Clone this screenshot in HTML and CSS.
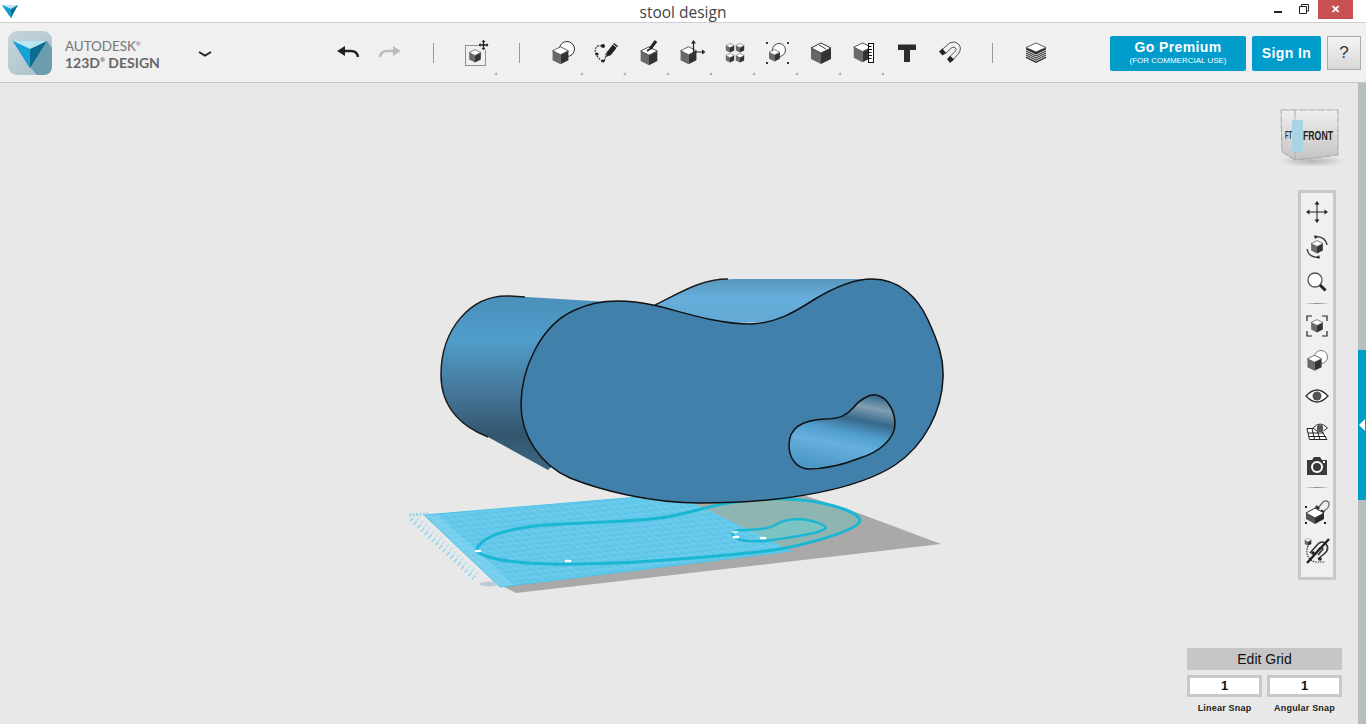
FILE: index.html
```html
<!DOCTYPE html>
<html lang="en">
<head>
    <meta charset="UTF-8">
    <meta name="viewport" content="width=device-width, initial-scale=1.0">
    <title>stool design</title>
    <link rel="stylesheet" href="styles.css">
</head>
<body>
    <svg class="defs" width="0" height="0">
        <defs>
            <symbol id="cube" viewBox="0 0 24 24">
                <polygon points="2,6 12,11 12,23 2,18" fill="#6a6a6a"/>
                <polygon points="22,6 12,11 12,23 22,18" fill="#333"/>
                <polygon points="12,1 22,6 12,11 2,6" fill="#fff" stroke="#333"/>
            </symbol>
            <linearGradient id="back-left" x1="0" y1="0" x2="0" y2="1">
                <stop offset="0" stop-color="#4a90bb"/>
                <stop offset="0.25" stop-color="#509dcb"/>
                <stop offset="0.55" stop-color="#45779a"/>
                <stop offset="0.8" stop-color="#33566e"/>
                <stop offset="1" stop-color="#3c6682"/>
            </linearGradient>
            <linearGradient id="back-top" x1="0" y1="0" x2="0" y2="1">
                <stop offset="0" stop-color="#5a97bc"/>
                <stop offset="0.4" stop-color="#66aedb"/>
                <stop offset="1" stop-color="#62a8d4"/>
            </linearGradient>
            <linearGradient id="hole" x1="0.7" y1="0" x2="0.4" y2="1">
                <stop offset="0" stop-color="#3f6f90"/>
                <stop offset="0.14" stop-color="#7f9fb4"/>
                <stop offset="0.32" stop-color="#39688a"/>
                <stop offset="0.5" stop-color="#4f9ccb"/>
                <stop offset="0.68" stop-color="#66b0dc"/>
                <stop offset="1" stop-color="#4b97c6"/>
            </linearGradient>
            <linearGradient id="cube-face" x1="0" y1="0" x2="0" y2="1">
                <stop offset="0" stop-color="#efefef"/>
                <stop offset="1" stop-color="#c4c4c4"/>
            </linearGradient>
            <radialGradient id="cube-shadow">
                <stop offset="0" stop-color="#b4b4b4"/>
                <stop offset="1" stop-color="#e8e8e8"/>
            </radialGradient>
            <pattern id="plate-grid" width="8" height="8" patternUnits="userSpaceOnUse" patternTransform="matrix(1 -0.11 0.8 0.55 424 515)">
                <rect width="8" height="8" fill="#63c8ea"/>
                <path d="M0 0H8M0 0V8" stroke="#4fbde3" stroke-width="0.8" fill="none"/>
                <path d="M0 4H8M4 0V8" stroke="#7dd3ef" stroke-width="0.5" fill="none"/>
            </pattern>
        </defs>
    </svg>

    <header class="titlebar">
        <svg class="app-mark" width="18" height="16" viewBox="0 0 18 16">
            <polygon points="1,2 17,2 10,15" fill="#0a6d92"/>
            <polygon points="1,2 10,6 10,15" fill="#12a0d0"/>
            <polygon points="1,2 17,2 10,6" fill="#b8e4f2"/>
        </svg>
        <div class="doc-title">stool design</div>
        <div class="win-controls">
            <span class="win-min"></span>
            <svg class="win-restore" width="10" height="10" viewBox="0 0 10 10">
                <path d="M2.5 2.5V.5H9.5V7H7.5M.5 2.5H7.5V9.5H.5Z" fill="none" stroke="#222"/>
            </svg>
            <span class="win-close">&#x2715;</span>
        </div>
    </header>

    <nav class="toolbar">
        <div class="brand">
            <svg class="logo" width="44" height="44" viewBox="0 0 44 44">
                <defs>
                    <linearGradient id="logo-bg" x1="0" y1="0" x2="1" y2="1">
                        <stop offset="0" stop-color="#c8d6dc"/>
                        <stop offset="1" stop-color="#a9bec7"/>
                    </linearGradient>
                </defs>
                <rect width="44" height="44" rx="9" fill="url(#logo-bg)"/>
                <path d="M39 10 L44 17 V35 Q44 44 35 44 H29 L22 36Z" fill="#6b9cb0"/>
                <polygon points="5,10 39,10 22,37" fill="#0b6c90"/>
                <polygon points="5,10 22,18 22,37" fill="#12a3d8"/>
                <polygon points="5,10 39,10 22,18" fill="#b9e6f5"/>
            </svg>
            <div class="brand-text">
                <div class="brand-top">AUTODESK<sup>&reg;</sup></div>
                <div class="brand-bottom">123D<sup>&reg;</sup> DESIGN</div>
            </div>
            <svg class="brand-menu" width="14" height="6" viewBox="0 0 14 6">
                <path d="M1 1 L7 4.5 L13 1" fill="none" stroke="#222" stroke-width="2"/>
            </svg>
        </div>

        <div class="tool-group history">
            <div class="tool">
                <svg width="24" height="16" viewBox="0 0 24 16"><path d="M1 6 L9 1 V11Z" fill="#222"/><path d="M8 6 H15 Q21 6 22 12" fill="none" stroke="#222" stroke-width="2.4"/></svg>
            </div>
            <div class="tool">
                <svg width="24" height="16" viewBox="0 0 24 16"><path d="M23 6 L15 1 V11Z" fill="#bbb"/><path d="M16 6 H9 Q3 6 2 12" fill="none" stroke="#bbb" stroke-width="2.4"/></svg>
            </div>
        </div>
        <span class="vsep"></span>
        <div class="tool-group">
            <div class="tool more">
                <svg width="26" height="26" viewBox="0 0 26 26">
                    <rect x="1.5" y="5.5" width="20" height="20" fill="none" stroke="#333" stroke-dasharray="1 1"/>
                    <rect x="14" y="0" width="12" height="10" fill="#f0f0f0"/>
                    <path d="M19.5 .5V9.5M15 5H24" stroke="#222" stroke-width="1.4"/>
                    <path d="M19.5 0L17.5 2H21.5ZM19.5 10L17.5 8H21.5ZM14.5 5L16.5 3V7ZM24.5 5L22.5 3V7Z" fill="#222"/>
                    <use href="#cube" x="4" y="9" width="14" height="14"/>
                </svg>
            </div>
        </div>
        <span class="vsep"></span>
        <div class="tool-group">
            <div class="tool more">
                <svg width="26" height="26" viewBox="0 0 26 26">
                    <circle cx="17" cy="9" r="7.5" fill="#fff" stroke="#333"/>
                    <use href="#cube" x="1" y="6" width="19" height="19"/>
                </svg>
            </div>
            <div class="tool more">
                <svg width="26" height="26" viewBox="0 0 26 26">
                    <path d="M9 6 C3 4 1 10 3 14 C5 18 8 21 10 21 C13 21 12 14 14 12" fill="none" stroke="#333" stroke-width="1.2" stroke-dasharray="2 1"/>
                    <circle cx="10" cy="6" r="2" fill="#222"/>
                    <circle cx="4" cy="14" r="1.6" fill="#222"/>
                    <circle cx="10" cy="21" r="1.6" fill="#222"/>
                    <path d="M14 12 L21 3 L25 6 L18 15 L13 17Z" fill="#222"/>
                    <path d="M20 4.5 L24 7.5" stroke="#f0f0f0"/>
                </svg>
            </div>
            <div class="tool more">
                <svg width="26" height="26" viewBox="0 0 26 26">
                    <use href="#cube" x="3" y="6" width="20" height="20"/>
                    <path d="M20 1 L14 9" stroke="#222" stroke-width="3"/>
                    <path d="M14 9 L11 11" stroke="#222" stroke-width="1.6"/>
                </svg>
            </div>
            <div class="tool more">
                <svg width="28" height="26" viewBox="0 0 28 26">
                    <use href="#cube" x="1" y="6" width="19" height="19"/>
                    <path d="M15.5 2V12H26" stroke="#222" fill="none" stroke-width="1.2"/>
                    <path d="M15.5 0L13 3.5H18ZM27.5 12L24 9.500V14.500Z" fill="#222"/>
                </svg>
            </div>
            <div class="tool more">
                <svg width="20" height="22" viewBox="0 0 20 22">
                    <use href="#cube" x="0" y="1" width="10" height="10"/>
                    <use href="#cube" x="10" y="1" width="10" height="10"/>
                    <use href="#cube" x="0" y="11" width="10" height="10"/>
                    <use href="#cube" x="10" y="11" width="10" height="10"/>
                </svg>
            </div>
            <div class="tool more">
                <svg width="26" height="26" viewBox="0 0 26 26">
                    <path d="M1 2H3V4H1ZM22 2H24V4H22ZM1 22H3V24H1ZM22 22H24V24H22Z" fill="#333"/>
                    <circle cx="14" cy="10" r="6.500" fill="#fff" stroke="#444"/>
                    <use href="#cube" x="3" y="9" width="13" height="13"/>
                </svg>
            </div>
            <div class="tool more">
                <svg width="24" height="24" viewBox="0 0 24 24">
                    <polygon points="2,7 12,12 12,23 2,18" fill="#666"/>
                    <polygon points="22,7 12,12 12,23 22,18" fill="#333"/>
                    <polygon points="12,2 22,7 12,12 2,7" fill="#fff" stroke="#333"/>
                    <path d="M10 4 L17 8" stroke="#444"/>
                </svg>
            </div>
            <div class="tool more">
                <svg width="24" height="24" viewBox="0 0 24 24">
                    <use href="#cube" x="0" y="1" width="21" height="21"/>
                    <rect x="16.500" y="2.500" width="5" height="19" fill="#fff" stroke="#111"/>
                    <path d="M17 5.500H19.500M17 8.500H20M17 11.500H19.500M17 14.500H20M17 17.500H19.500" stroke="#111"/>
                </svg>
            </div>
            <div class="tool">
                <svg width="20" height="20" viewBox="0 0 20 20">
                    <path d="M1 1.500H19V7H13V19H7V7H1Z" fill="#2b2b2b"/>
                </svg>
            </div>
            <div class="tool">
                <svg width="24" height="24" viewBox="0 0 24 24">
                    <path d="M3.500 9 L12 1.800 Q17 -.500 20.500 3 Q24 7 21 12 L14 20" fill="none" stroke="#555" stroke-width="1"/>
                    <path d="M7 13 L14 6.500 Q16 5.500 17.500 7 Q19 8.500 17 10.500 L10.500 17" fill="none" stroke="#555" stroke-width="1"/>
                    <path d="M1 10.500 L4.500 7.500 L8 12 L4.500 14.500ZM9 18 L12.500 15 L16 18.500 L12 22Z" fill="#222"/>
                </svg>
            </div>
        </div>
        <span class="vsep"></span>
        <div class="tool-group">
            <div class="tool">
                <svg width="22" height="22" viewBox="0 0 22 22">
                    <polygon points="11,9 21,6 21,16 11,21 1,16 1,6" fill="#2b2b2b"/>
                    <path d="M1 8 L11 13 L21 8M1 10 L11 15 L21 10M1 12 L11 17 L21 12M1 14 L11 19 L21 14" stroke="#f0f0f0" stroke-width="0.9" fill="none"/>
                    <polygon points="11,1 21,5.500 11,10 1,5.500" fill="#fff" stroke="#333" stroke-width="0.8"/>
                </svg>
            </div>
        </div>

        <div class="account">
            <button class="cta premium">Go Premium<small>(FOR COMMERCIAL USE)</small></button>
            <button class="cta signin">Sign In</button>
            <button class="help">?</button>
        </div>
    </nav>

    <main class="viewport">
        <svg class="scene" width="1366" height="641" viewBox="0 83 1366 641">
            <!-- shadow on the floor -->
            <polygon points="516,593 941,544 858,513 800,494 640,500 500,585" fill="#a9a9a9"/>

            <!-- sketch profile, the part past the plate -->
            <path d="M702 509 C725 501 780 498 805 501 C835 505 860 512 860 521 C858 529 820 541 786 548 L716 555 Z" fill="#8fb5b2"/>
            <path d="M731 534 C745 531 760 531 771 527 C780 521 786 519 798 519 C812 520 824 524 826 528 C822 533 795 537 765 541 L738 541 Z" fill="#7cc3c3"/>

            <!-- sketch plate -->
            <polygon points="424,515 675,494 792,551 500,587" fill="url(#plate-grid)"/>
            <polygon points="424,515 437,514 514,585 500,587" fill="#a8e2f5" opacity="0.3"/>
            <path d="M424 515 L675 494M424 515 L500 587 L792 551" fill="none" stroke="#4cc4e6" stroke-width="1"/>
            <path d="M409 515 L428 514" stroke="#8bd8f0" stroke-width="3" stroke-dasharray="2 1.500"/>
            <path d="M411 519 L474 578" stroke="#8ed8f0" stroke-width="5" stroke-dasharray="1.500 3.500"/>
            <path d="M418 518 L478 575" stroke="#a5e0f3" stroke-width="4" stroke-dasharray="1 4"/>
            <ellipse cx="489" cy="584" rx="9" ry="2.500" fill="#b4c8d4" opacity="0.9"/>

            <!-- sketch outline -->
            <path d="M476 551 C480 538 500 529 545 525 C590 522 630 522 660 518 C690 514 705 506 735 502 C770 497 805 498 830 505 C850 510 860 516 860 521 C858 529 820 541 786 548 C760 553 720 556 680 559 C640 562 590 565 550 564 C510 563 485 558 476 551 Z" fill="none" stroke="#1ab7d2" stroke-width="3"/>
            <path d="M733 535 C731 531 735 530 745 530 C760 530 768 529 775 525 C783 520 790 519 800 519 C812 520 824 524 826 528 C822 533 795 537 765 541 C750 542 737 541 733 535 Z" fill="none" stroke="#1ab7d2" stroke-width="2.500"/>
            <ellipse cx="478" cy="551" rx="3.500" ry="1.300" fill="#fff"/>
            <ellipse cx="568" cy="561" rx="3.500" ry="1.300" fill="#fff"/>
            <ellipse cx="763" cy="538" rx="3.500" ry="1.300" fill="#fff"/>
            <ellipse cx="736" cy="537" rx="3.500" ry="1.300" fill="#fff"/>
            <ellipse cx="735" cy="532" rx="3.500" ry="1.300" fill="#bfe8ee"/>

            <!-- stool body -->
            <path d="M655 305 C680 293 700 279 735 279 L872 279 L800 320 L700 325 Z" fill="url(#back-top)"/>
            <path d="M655 305 C680 293 700 279 728 279" fill="none" stroke="#1b1b1b" stroke-width="1.500"/>
            <path d="M610 302 L510 296 C470 294 441 330 441 375 C441 410 465 428 488 437 L548 470 L620 400 Z" fill="url(#back-left)"/>
            <path d="M525 297 L510 296 C470 294 441 330 441 375 C441 410 465 428 488 437" fill="none" stroke="#1b1b1b" stroke-width="1.500"/>
            <path d="M653 305 C680 311 715 324 749 324 C775 324 795 312 815 299 C835 287 855 279 872 279 C900 279 918 298 928 320 C938 342 944 358 943 378 C942 410 925 445 895 465 C860 488 790 503 700 503 C650 503 600 490 570 478 C540 465 521 435 521 405 C521 370 540 325 575 310 C600 298 630 300 653 305 Z" fill="#4080ab" stroke="#111" stroke-width="1.500"/>
            <path d="M789 445 C789 428 802 420 825 419 C840 419 847 415 853 408 C860 399 870 394 876 395 C888 397 895 412 895 424 C895 438 880 452 860 458 C840 466 820 469 808 469 C796 468 789 458 789 445 Z" fill="url(#hole)" stroke="#111" stroke-width="1.500"/>
        </svg>

        <div class="view-cube">
            <svg width="72" height="64" viewBox="0 0 72 64">
                <ellipse cx="36" cy="54" rx="34" ry="6" fill="url(#cube-shadow)"/>
                <polygon points="5,3 19,3 19,53 6,45" fill="url(#cube-face)"/>
                <polygon points="19,3 62,3 62,48 19,53" fill="url(#cube-face)"/>
                <path d="M5 3 H62 V48 L19 53 L6 45 Z M19 3 V53" fill="none" stroke="#a8a8a8" stroke-dasharray="8 1"/>
                <rect x="16" y="13" width="11" height="32" fill="#a8d4e4"/>
                <text x="27" y="33" class="cube-front" textLength="30" lengthAdjust="spacingAndGlyphs">FRONT</text>
                <text x="9" y="32" class="cube-side" textLength="7" lengthAdjust="spacingAndGlyphs">FT</text>
            </svg>
        </div>

        <aside class="nav-panel">
            <div class="nav-tool">
                <svg width="22" height="22" viewBox="0 0 22 22">
                    <path d="M11 2V20M2 11H20" stroke="#222" stroke-width="1"/>
                    <path d="M11 0L8.500 3.500H13.500ZM11 22L8.500 18.500H13.500ZM0 11L3.500 8.500V13.500ZM22 11L18.500 8.500V13.500Z" fill="#222"/>
                </svg>
            </div>
            <div class="nav-tool">
                <svg width="24" height="24" viewBox="0 0 24 24">
                    <use href="#cube" x="5" y="5" width="14" height="14"/>
                    <path d="M10 2 C16 1 21 4 22 10M14 22 C8 23 3 20 2 14" fill="none" stroke="#444" stroke-width="1.500"/>
                    <path d="M9 .500 L13 1 L10 4ZM15 23.500 L11 23 L14 20Z" fill="#222"/>
                </svg>
            </div>
            <div class="nav-tool">
                <svg width="20" height="20" viewBox="0 0 20 20">
                    <circle cx="8" cy="8" r="7" fill="#fff" stroke="#555" stroke-width="1.300"/>
                    <path d="M13 13 L18.500 18.500" stroke="#222" stroke-width="3"/>
                </svg>
            </div>
            <div class="nav-sep"></div>
            <div class="nav-tool">
                <svg width="22" height="22" viewBox="0 0 22 22">
                    <path d="M1 6V1H6M16 1H21V6M21 16V21H16M6 21H1V16" fill="none" stroke="#222" stroke-width="1.200"/>
                    <use href="#cube" x="4" y="4" width="14" height="14"/>
                </svg>
            </div>
            <div class="nav-tool">
                <svg width="24" height="24" viewBox="0 0 24 24">
                    <circle cx="16" cy="8" r="6.500" fill="#fff" stroke="#777"/>
                    <use href="#cube" x="1" y="4" width="17" height="20"/>
                </svg>
            </div>
            <div class="nav-tool">
                <svg width="24" height="16" viewBox="0 0 24 16">
                    <path d="M1 8 Q12 -4 23 8 Q12 20 1 8Z" fill="#fff" stroke="#333" stroke-width="1.300"/>
                    <circle cx="12" cy="8" r="4.500" fill="#555"/>
                </svg>
            </div>
            <div class="nav-tool">
                <svg width="22" height="18" viewBox="0 0 22 18">
                    <path d="M1 6.500 H14 L21 17.500 H3.500 Z" fill="#fff" stroke="#222"/>
                    <path d="M2 11 H18M3 14.500 H20M6 6.500 L8.500 17.500M10.500 6.500 L14 17.500" stroke="#222" fill="none"/>
                    <path d="M7 6 Q14 -2 21.500 6 Q14 13 7 6Z" fill="#fff" stroke="#333"/>
                    <circle cx="14" cy="6" r="3.200" fill="#555"/>
                </svg>
            </div>
            <div class="nav-tool">
                <svg width="20" height="18" viewBox="0 0 20 18">
                    <path d="M0 3H5L7 0H13L15 3H20V18H0Z" fill="#3a3a3a"/>
                    <circle cx="10" cy="10" r="5" fill="#3a3a3a" stroke="#fff" stroke-width="2"/>
                    <rect x="16" y="4" width="2" height="2" fill="#fff"/>
                </svg>
            </div>
            <div class="nav-sep"></div>
            <div class="nav-tool tall">
                <svg width="26" height="26" viewBox="0 0 26 26">
                    <path d="M14 9 L19 3 Q23 .500 25 4 Q26 8 20 12" fill="none" stroke="#666" stroke-width="1.300"/>
                    <path d="M12.500 6 L16 9 L14 11.500 L11 8.500ZM17.500 10.500 L21 12.500 L19 15 L15.500 13Z" fill="#333"/>
                    <polygon points="2,14 11,19 11,25 2,20" fill="#555"/>
                    <polygon points="20,14 11,19 11,25 20,20" fill="#2b2b2b"/>
                    <polygon points="11,9 20,14 11,19 2,14" fill="#fff" stroke="#333"/>
                    <path d="M1 7H3V9H1ZM1 23H3V25H1ZM20 23H22V25H20Z" fill="#222"/>
                </svg>
            </div>
            <div class="nav-tool tall">
                <svg width="26" height="26" viewBox="0 0 26 26">
                    <use href="#cube" x="0" y="0" width="8" height="8"/>
                    <path d="M4 8 C1 15 4 22 11 24 H21" fill="none" stroke="#333" stroke-width="1.200" stroke-dasharray="1.500 1"/>
                    <path d="M6 15 L14 6 Q18 2 22 6 Q26 11 20 16 L14 21" fill="none" stroke="#333" stroke-width="1.600"/>
                    <path d="M10 17 L16 10 Q18 9 19 11 L14 17" fill="none" stroke="#333" stroke-width="1.600"/>
                    <circle cx="9" cy="15" r="1.800" fill="#222"/>
                    <circle cx="16" cy="21" r="1.800" fill="#222"/>
                    <path d="M3 25 L25 1" stroke="#222" stroke-width="2.400"/>
                </svg>
            </div>
        </aside>

        <div class="side-strip">
            <div class="strip-active"><span class="strip-arrow"></span></div>
        </div>

        <section class="grid-panel">
            <div class="grid-title">Edit Grid</div>
            <div class="snap-row">
                <div class="snap">
                    <div class="snap-value">1</div>
                    <div class="snap-label">Linear Snap</div>
                </div>
                <div class="snap">
                    <div class="snap-value">1</div>
                    <div class="snap-label">Angular Snap</div>
                </div>
            </div>
        </section>
    </main>
</body>
</html>
```

FILE: styles.css
```css
* {
    box-sizing: border-box;
}
html, body {
    margin: 0;
    height: 100%;
    overflow: hidden;
}
body {
    font-family: "Liberation Sans", Arial, sans-serif;
    background-color: #e8e8e8;
    display: flex;
    flex-direction: column;
}
.defs {
    position: absolute;
}

.titlebar {
    height: 23px;
    flex: none;
    background-color: #fff;
    border-bottom: 1px solid #cfcfcf;
    display: grid;
    grid-template-columns: 1fr auto 1fr;
    align-items: start;
}
.app-mark {
    margin: 3px 0 0 1px;
}
.doc-title {
    font-family: "Open Sans", sans-serif;
    font-size: 15.500px;
    line-height: 25px;
    color: #444;
}
.win-controls {
    display: flex;
    justify-content: flex-end;
    align-items: flex-start;
    padding-right: 13px;
}
.win-min {
    width: 8px;
    height: 2px;
    background-color: #222;
    margin: 11px 17px 0 0;
}
.win-restore {
    margin: 4px 9px 0 0;
}
.win-close {
    width: 35px;
    height: 19px;
    background-color: #c75050;
    color: #fff;
    font-size: 11px;
    font-weight: bold;
    line-height: 19px;
    text-align: center;
}

.toolbar {
    height: 60px;
    flex: none;
    background-color: #f0f0f0;
    border-bottom: 1px solid #c8c8c8;
    display: flex;
    align-items: center;
    padding-left: 8px;
}
.brand {
    width: 319px;
    flex: none;
    display: flex;
    align-items: center;
}
.brand-text {
    margin-left: 13px;
    padding-top: 3px;
    color: #666;
    width: 133px;
    font-family: Lato, sans-serif;
}
.brand-top {
    font-size: 13.500px;
    line-height: 16px;
    letter-spacing: -0.1px;
    color: #777;
}
.brand-bottom {
    font-size: 14px;
    font-weight: bold;
    line-height: 17px;
}
.brand-text sup {
    font-size: 6px;
    line-height: 0;
}
.brand-menu {
    margin-top: 3px;
}
.tool-group {
    display: flex;
}
.tool {
    width: 43px;
    height: 40px;
    display: flex;
    align-items: center;
    justify-content: center;
    position: relative;
}
.history .tool {
    width: 42px;
}
.history + .vsep {
    margin-left: 22px;
}
.more::after {
    content: "";
    position: absolute;
    right: 1px;
    bottom: -2px;
    border-style: solid;
    border-width: 0 0 3px 3px;
    border-color: transparent transparent #aaa transparent;
}
.vsep {
    width: 1px;
    height: 20px;
    background-color: #999;
    margin: 0 21px;
}
.account {
    margin-left: auto;
    margin-top: 1px;
    display: flex;
    align-items: flex-start;
    gap: 6px;
    padding-right: 5px;
}
.cta {
    height: 35px;
    border: none;
    border-radius: 2px;
    background-color: #009ccc;
    color: #fff;
    font-family: inherit;
    font-weight: bold;
    padding: 0;
}
.premium {
    width: 136px;
    font-size: 14px;
    letter-spacing: 0.4px;
    line-height: 16px;
}
.premium small {
    display: block;
    font-size: 8px;
    font-weight: normal;
    letter-spacing: 0;
    line-height: 12px;
}
.signin {
    width: 69px;
    font-size: 14px;
    letter-spacing: 0.4px;
}
.help {
    width: 34px;
    height: 34px;
    border: 1px solid #aaa;
    background: linear-gradient(#f4f4f4, #d8d8d8);
    color: #333;
    font-family: inherit;
    font-size: 17px;
    padding: 0;
}

/* free canvas, everything in it floats over the model */
.viewport {
    flex: 1;
    position: relative;
    background-color: #e8e8e8;
    overflow: hidden;
}
.scene {
    display: block;
}
.view-cube {
    position: absolute;
    left: 1276px;
    top: 24px;
}
.cube-front {
    font-family: "Liberation Sans", sans-serif;
    font-size: 13px;
    font-weight: bold;
    fill: #222;
}
.cube-side {
    font-family: "Liberation Sans", sans-serif;
    font-size: 10px;
    font-weight: bold;
    fill: #333;
}
.nav-panel {
    position: absolute;
    left: 1298px;
    top: 107px;
    width: 38px;
    height: 390px;
    background-color: #f0f0f0;
    border: 3px solid #c8c8c8;
    padding-top: 1px;
    display: flex;
    flex-direction: column;
    align-items: center;
}
.nav-tool {
    height: 35px;
    flex: none;
    display: flex;
    align-items: center;
    justify-content: center;
}
.nav-tool.tall {
    height: 39px;
}
.nav-sep {
    width: 26px;
    height: 1px;
    flex: none;
    margin: 4px 0;
    background: linear-gradient(90deg, #f0f0f0, #888, #f0f0f0);
}
.side-strip {
    position: absolute;
    right: 0;
    top: 0;
    bottom: 0;
    width: 8px;
    background-color: #b5bfbd;
}
.strip-active {
    position: absolute;
    top: 267px;
    width: 8px;
    height: 150px;
    background-color: #009ccc;
}
.strip-arrow {
    position: absolute;
    left: 1px;
    top: 69px;
    border-style: solid;
    border-width: 6px 6px 6px 0;
    border-color: transparent #fff transparent transparent;
}
.grid-panel {
    position: absolute;
    left: 1187px;
    top: 565px;
    width: 155px;
}
.grid-title {
    height: 22px;
    background-color: #c6c6c6;
    color: #111;
    font-size: 14px;
    line-height: 22px;
    text-align: center;
}
.snap-row {
    display: flex;
    gap: 5px;
    margin-top: 5px;
}
.snap {
    flex: 1;
    text-align: center;
}
.snap-value {
    height: 22px;
    background-color: #fff;
    border: 3px solid #c8c8c8;
    color: #111;
    font-size: 13px;
    font-weight: bold;
    line-height: 16px;
}
.snap-label {
    margin-top: 6px;
    color: #222;
    font-size: 9px;
    font-weight: bold;
    letter-spacing: 0.2px;
}
```
